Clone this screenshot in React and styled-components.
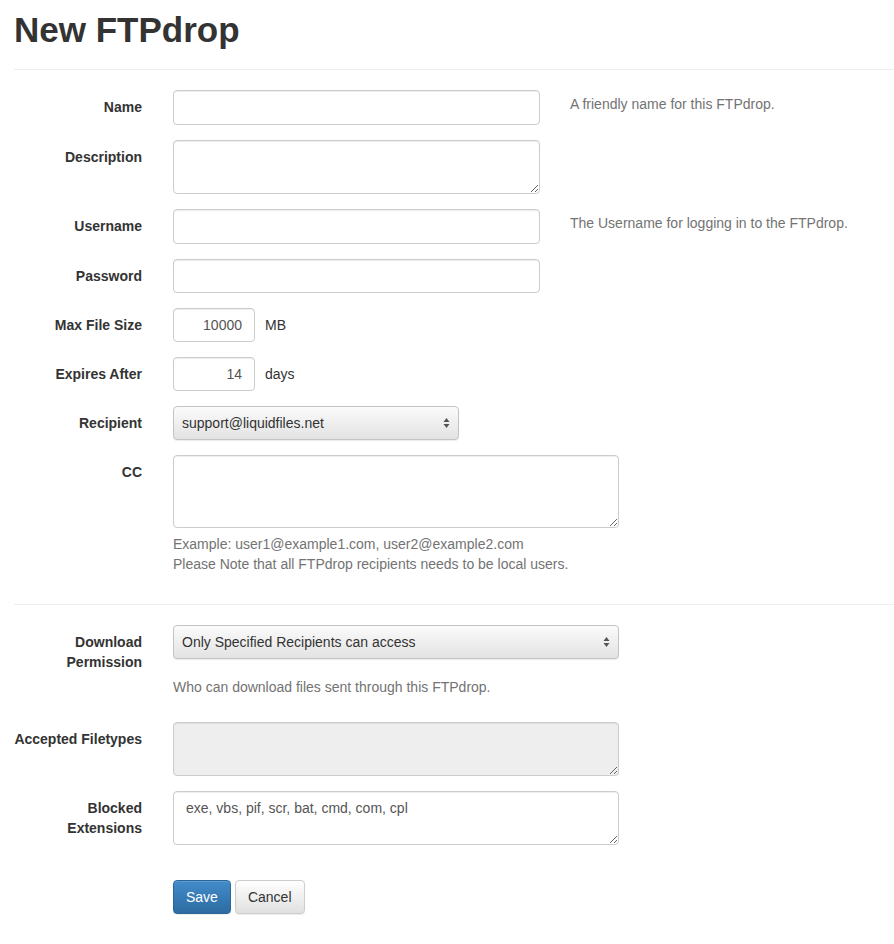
import React from 'react';
import styled, { createGlobalStyle } from 'styled-components';

// --- Global ---
const GlobalStyle = createGlobalStyle`
  body {
    margin: 0;
    background: #fff;
    font-family: "Liberation Sans", Arial, sans-serif;
    font-size: 14px;
    line-height: 20px;
    color: #333;
  }
  * { box-sizing: border-box; }
`;

// --- Layout ---
const Page = styled.div`
  padding: 0 0 30px 14px;
`;

const PageHeader = styled.div`
  padding: 0 0 19px;
  border-bottom: 1px solid #eee;
`;

const Title = styled.h1`
  margin: 10px 0 0;
  font-size: 35px;
  line-height: 40px;
  font-weight: 700;
  color: #333;
`;

const Form = styled.form`
  margin-top: 20px;
`;

const Divider = styled.hr`
  border: 0;
  border-top: 1px solid #eee;
  margin: ${p => p.$top || 0}px 0 20px;
`;

const FormGroup = styled.div`
  display: grid;
  grid-template-columns: 128px 1fr;
  column-gap: 31px;
  margin-bottom: ${p => (p.$mb !== undefined ? p.$mb : 15)}px;
`;

const Label = styled.label`
  text-align: right;
  padding-top: 7px;
  font-weight: 700;
  line-height: 20px;
  white-space: nowrap;
  color: #333;
`;

const Controls = styled.div`
  display: flex;
  flex-direction: ${p => (p.$stack ? 'column' : 'row')};
  align-items: flex-start;
  gap: ${p => p.$gap || 0}px;
`;

// --- Fields ---
const fieldBase = `
  border: 1px solid #ccc;
  border-radius: 4px;
  box-shadow: inset 0 1px 1px rgba(0, 0, 0, 0.075);
  font-family: "Liberation Sans", Arial, sans-serif;
  font-size: 14px;
  line-height: 20px;
  color: #555;
  padding: 6px 12px;
  outline: none;
`;

const Input = styled.input`
  ${fieldBase}
  width: ${p => p.$w}px;
  height: ${p => p.$h || 34}px;
  text-align: ${p => (p.$right ? 'right' : 'left')};
  background: #fff;
`;

const TextArea = styled.textarea`
  ${fieldBase}
  display: block;
  width: ${p => p.$w}px;
  height: ${p => p.$h}px;
  background: ${p => (p.$disabled ? '#eee' : '#fff')};
  resize: both;
`;

const SelectBox = styled.div`
  width: ${p => p.$w}px;
  height: 34px;
  display: flex;
  align-items: center;
  justify-content: space-between;
  padding: 0 8px;
  border: 1px solid #c4c4c4;
  border-radius: 4px;
  background: linear-gradient(#fbfbfb, #f0f0f0 45%, #e3e3e3);
  box-shadow: 0 1px 1px rgba(0, 0, 0, 0.08);
  color: #333;
`;

const Unit = styled.span`
  padding-top: 7px;
  color: #333;
`;

const SideHelp = styled.span`
  padding-top: 4px;
  color: #737373;
  white-space: nowrap;
`;

const HelpBlock = styled.div`
  margin-top: ${p => p.$top || 5}px;
  color: #737373;
  line-height: 20px;
`;

const Actions = styled.div`
  display: flex;
  gap: 4px;
  padding-left: 159px;
  margin-top: 35px;
`;

const Button = styled.button`
  height: 34px;
  padding: 6px 12px;
  border-radius: 4px;
  font-family: "Liberation Sans", Arial, sans-serif;
  font-size: 14px;
  line-height: 20px;
  cursor: pointer;
  ${p =>
    p.$primary
      ? `
    color: #fff;
    border: 1px solid #2b669a;
    background: linear-gradient(#428bca, #2d6ca2);
    box-shadow: inset 0 1px 0 rgba(255,255,255,.15), 0 1px 1px rgba(0,0,0,.075);
  `
      : `
    color: #333;
    border: 1px solid #ccc;
    background: linear-gradient(#fff, #e0e0e0);
    box-shadow: inset 0 1px 0 rgba(255,255,255,.15), 0 1px 1px rgba(0,0,0,.075);
  `}
`;

const UpDown = () => (
  <svg width="7" height="12" viewBox="0 0 7 12">
    <path d="M3.5 1 L6.5 5 H0.5 Z" fill="#555" />
    <path d="M3.5 11 L6.5 7 H0.5 Z" fill="#555" />
  </svg>
);

const Select = ({ width, value }) => (
  <SelectBox $w={width}>
    <span>{value}</span>
    <UpDown />
  </SelectBox>
);

export default function App() {
  return (
    <Page>
      <GlobalStyle />
      <PageHeader>
        <Title>New FTPdrop</Title>
      </PageHeader>

      <Form onSubmit={e => e.preventDefault()}>
        <FormGroup>
          <Label>Name</Label>
          <Controls $gap={30}>
            <Input $w={367} $h={35} />
            <SideHelp>A friendly name for this FTPdrop.</SideHelp>
          </Controls>
        </FormGroup>

        <FormGroup>
          <Label>Description</Label>
          <Controls>
            <TextArea $w={367} $h={54} />
          </Controls>
        </FormGroup>

        <FormGroup>
          <Label>Username</Label>
          <Controls $gap={30}>
            <Input $w={367} $h={35} />
            <SideHelp>The Username for logging in to the FTPdrop.</SideHelp>
          </Controls>
        </FormGroup>

        <FormGroup>
          <Label>Password</Label>
          <Controls>
            <Input type="password" $w={367} $h={34} />
          </Controls>
        </FormGroup>

        <FormGroup>
          <Label>Max File Size</Label>
          <Controls $gap={10}>
            <Input $w={82} $right defaultValue="10000" />
            <Unit>MB</Unit>
          </Controls>
        </FormGroup>

        <FormGroup>
          <Label>Expires After</Label>
          <Controls $gap={10}>
            <Input $w={82} $right defaultValue="14" />
            <Unit>days</Unit>
          </Controls>
        </FormGroup>

        <FormGroup>
          <Label>Recipient</Label>
          <Controls>
            <Select width={286} value="support@liquidfiles.net" />
          </Controls>
        </FormGroup>

        <FormGroup $mb={0}>
          <Label>CC</Label>
          <Controls $stack>
            <TextArea $w={446} $h={73} />
            <HelpBlock $top={6}>
              Example: user1@example1.com, user2@example2.com
              <br />
              Please Note that all FTPdrop recipients needs to be local users.
            </HelpBlock>
          </Controls>
        </FormGroup>

        <Divider $top={30} />

        <FormGroup $mb={25}>
          <Label>
            Download
            <br />
            Permission
          </Label>
          <Controls $stack>
            <Select width={446} value="Only Specified Recipients can access" />
            <HelpBlock $top={18}>Who can download files sent through this FTPdrop.</HelpBlock>
          </Controls>
        </FormGroup>

        <FormGroup>
          <Label>Accepted Filetypes</Label>
          <Controls>
            <TextArea $w={446} $h={54} $disabled readOnly />
          </Controls>
        </FormGroup>

        <FormGroup $mb={0}>
          <Label>
            Blocked
            <br />
            Extensions
          </Label>
          <Controls>
            <TextArea $w={446} $h={54} defaultValue="exe, vbs, pif, scr, bat, cmd, com, cpl" />
          </Controls>
        </FormGroup>

        <Actions>
          <Button $primary>Save</Button>
          <Button>Cancel</Button>
        </Actions>
      </Form>
    </Page>
  );
}
